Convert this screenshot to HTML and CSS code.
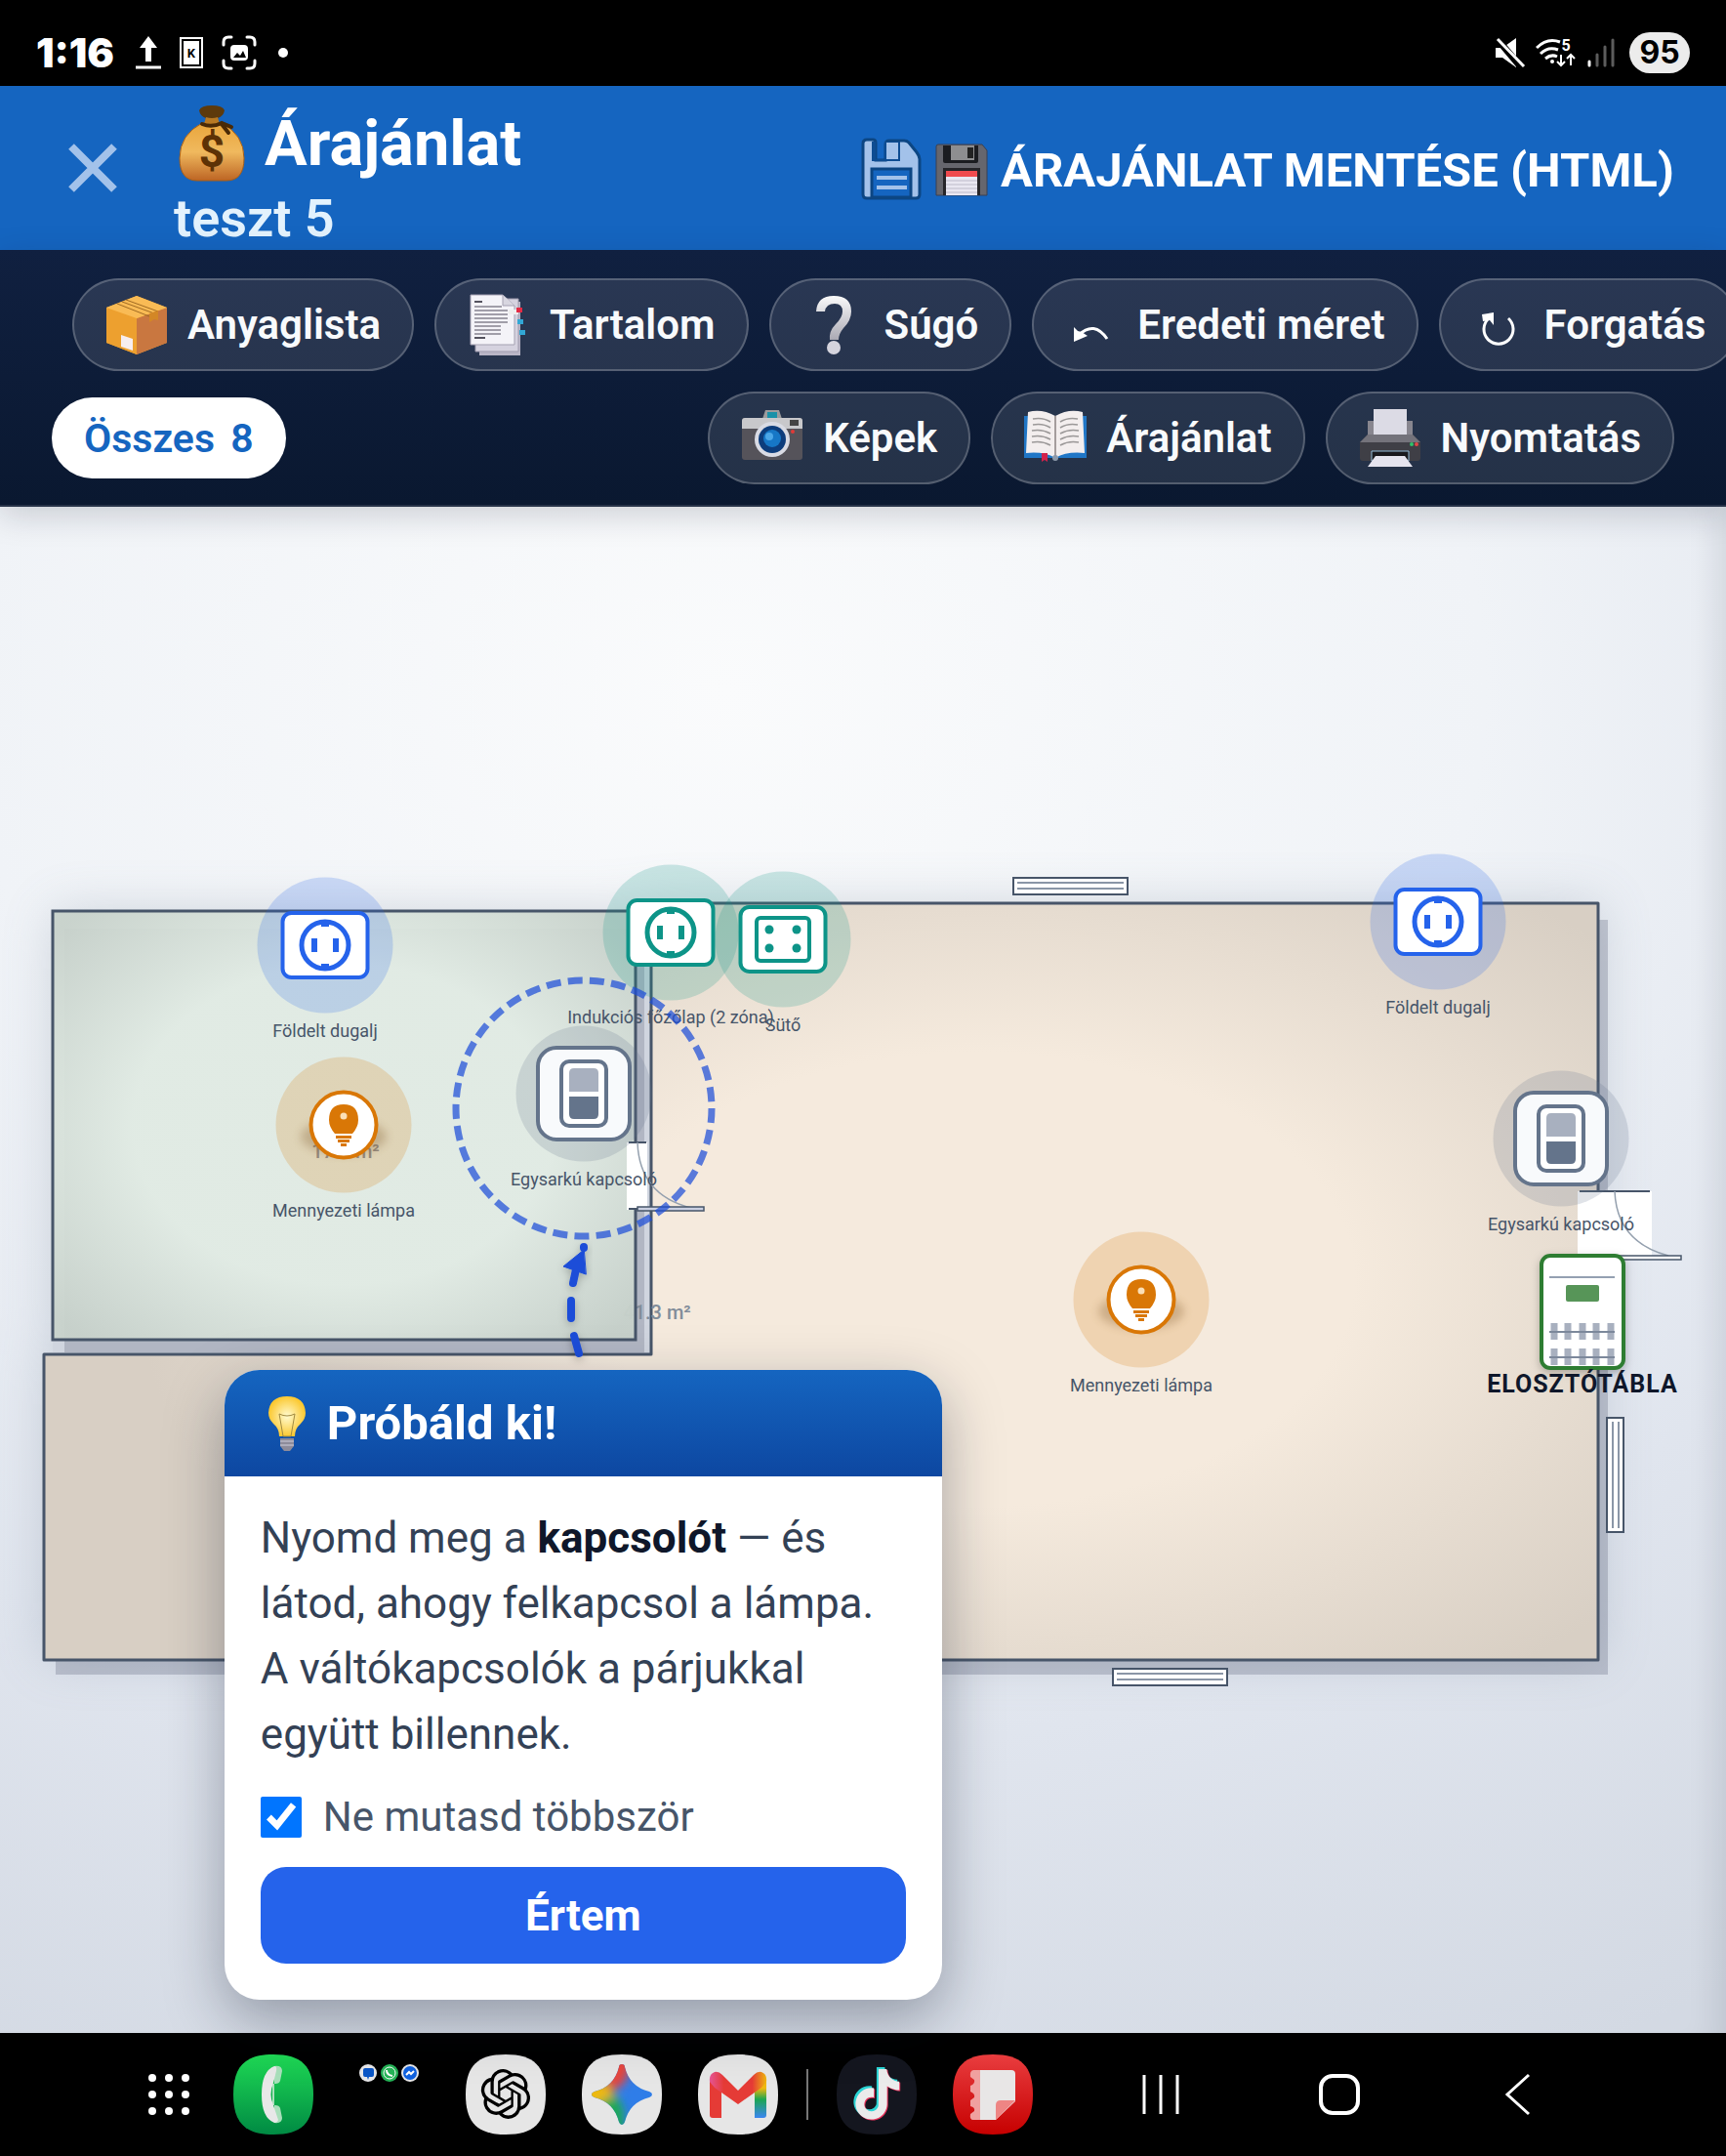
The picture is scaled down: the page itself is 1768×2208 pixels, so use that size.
FILE: index.html
```
<!DOCTYPE html>
<html lang="hu">
<head>
    <meta charset="UTF-8">
    <meta name="viewport" content="width=device-width, initial-scale=1.0">
    <title>Árajánlat – teszt 5</title>
    <link rel="stylesheet" href="styles.css">
</head>
<body>
    <div class="status-bar">
        <span class="clock">1:16</span>
        <svg class="status-icon" width="26" height="36" viewBox="0 0 26 36"><path d="M13 1l9 12h-6v14h-6V13H4z" fill="#fff"/><path d="M0 33h26" stroke="#fff" stroke-width="3"/></svg>
        <svg class="status-icon" width="24" height="36" viewBox="0 0 24 36"><path d="M1 3h22v30H1z" fill="#000" stroke="#fff" stroke-width="2"/><path d="M4 6h16v24H4z" fill="#fff"/><text x="12" y="23" class="card-letter">K</text></svg>
        <svg class="status-icon" width="36" height="36" viewBox="0 0 36 36" fill="none" stroke="#fff" stroke-width="3" stroke-linecap="round"><path d="M2 10V7q0-5 5-5h3M26 2h3q5 0 5 5v3M34 26v3q0 5-5 5h-3M10 34H7q-5 0-5-5v-3"/><rect x="9" y="10" width="18" height="16" rx="4" fill="#fff" stroke="none"/><path d="M12 23l4-5 3 3 3-5 3 7z" fill="#000" stroke="none"/></svg>
        <span class="status-dot"></span>
        <div class="status-right">
            <svg width="32" height="32" viewBox="0 0 32 32"><path d="M1 11h7L22 1v30L8 21H1z" fill="#fff"/><path d="M1 0l27 32" stroke="#000" stroke-width="7"/><path d="M3 2l27 28" stroke="#fff" stroke-width="3"/></svg>
            <svg width="42" height="32" viewBox="0 0 42 32" fill="none" stroke="#fff" stroke-width="3"><path d="M1 11Q12 0 25 5M5 17q8-8 18-4M10 22q6-5 12-2"/><circle cx="17" cy="25" r="2" fill="#fff" stroke="none"/><path d="M26 18v10M22 25l4 4 4-4M36 29V19M32 22l4-4 4 4" stroke-width="2"/><text x="31" y="14" class="wifi-digit">5</text></svg>
            <svg width="30" height="32" viewBox="0 0 30 32" stroke-width="3" stroke-linecap="round"><path d="M3 25v4" stroke="#fff"/><path d="M11 18v11M19 10v19M27 3v26" stroke="#5c5c5c"/></svg>
            <span class="battery">95</span>
        </div>
    </div>

    <header class="header">
        <button class="close-btn" aria-label="Bezárás"><svg width="52" height="54" viewBox="0 0 52 54"><path d="M4 5l44 44M48 5L4 49" stroke="#a3c2ea" stroke-width="8"/></svg></button>
        <div class="header-title">
            <h1>
                <svg width="68" height="78" viewBox="0 0 68 78">
                    <defs><linearGradient id="bag" x2="0" y2="1"><stop offset="0" stop-color="#e9a63c"/><stop offset=".5" stop-color="#f0b95e"/><stop offset="1" stop-color="#bd6524"/></linearGradient></defs>
                    <path d="M24 18Q1 30 1 54q0 23 18 23h30q18 0 18-23Q67 30 44 18z" fill="url(#bag)" stroke="#a85f16"/>
                    <path d="M21 5q2-5 13-5t13 5q-1 6-7 8l2 8H26l2-8q-6-2-7-8z" fill="#5d3a0c"/>
                    <path d="M28 12q6 2 12 0l2 7H26z" fill="#b87a24"/>
                    <path d="M24 19q10 4 20-1l10 4M44 19l7 9" stroke="#4a2a06" stroke-width="4" fill="none" stroke-linecap="round"/>
                    <text x="34" y="63" class="bag-sign">$</text>
                </svg>
                Árajánlat
            </h1>
            <p>teszt 5</p>
        </div>
        <button class="save-btn">
            <svg width="64" height="68" viewBox="0 0 64 68"><path d="M7 3h6q3 0 3 3v18h10V8q0-4 4-4h15q3 0 5 2l8 10q3 4 3 7v36q0 4-4 4H7q-4 0-4-4V7q0-4 4-4z" fill="#a3c2ea" stroke="#0c4683" stroke-width="3"/><path d="M25 5h16v20H12V5h4v18h9z" fill="#0d4c92"/><path d="M27 6h12v17H27z" fill="#a3c2ea"/><path d="M12 33h40v29H12z" fill="#1565c0" stroke="#0c4683" stroke-width="3"/><path d="M17 42h31M17 52h31" stroke="#a3c2ea" stroke-width="4"/></svg>
            <svg width="54" height="54" viewBox="0 0 54 54"><path d="M3 1h45l5 6v46H1V3q0-2 2-2z" fill="#66666d" stroke="#3a4153"/><path d="M8 2h36v16q0 2-2 2H10q-2 0-2-2z" fill="#1b1c20"/><path d="M16 2h24v15H16z" fill="#8e8e90"/><path d="M33 4h6v11h-6z" fill="#222"/><path d="M8 25h38v28H8z" fill="#262529"/><path d="M11 28h32v25H11z" fill="#e9e7f1"/><path d="M11 28h32v6H11z" fill="#f04a4e"/><path d="M11 38h32M11 42h32M11 46h32M11 50h32" stroke="#bdbac9"/></svg>
            <span>ÁRAJÁNLAT MENTÉSE (HTML)</span>
        </button>
    </header>

    <nav class="toolbar">
        <div class="toolbar-row toolbar-scroll">
            <button class="pill">
                <svg width="64" height="64" viewBox="0 0 64 64"><path d="M1 14L32 2l31 12v36L32 62 1 50z" fill="#f2a32f"/><path d="M1 14l31 11v37L1 50z" fill="#eda02f"/><path d="M63 14L32 25v37l31-12z" fill="#c97740"/><path d="M1 14L32 2l31 12-31 11z" fill="#f9bb55"/><path d="M12 10l33 13M17 8l33 12M21 6l33 12" stroke="#a06a22" stroke-width="1"/><path d="M45 20l9-3v10l-4-1-5 3z" fill="#d38726"/><path d="M16 42l12 4v12l-12-4z" fill="#f7eef0"/></svg>
                Anyaglista
            </button>
            <button class="pill">
                <svg width="64" height="64" viewBox="0 0 64 64"><path d="M12 8h42v55H12z" fill="#b9b5c6"/><path d="M8 5h44v54H8z" fill="#d5d2df" stroke="#9f9bad"/><path d="M3 1h33l12 11v40H3z" fill="#f4f3f8" stroke="#a5a1b2"/><path d="M36 1v11h12" fill="#d8d6e0" stroke="#a5a1b2"/><path d="M7 8h8M7 45h11" stroke="#55535f" stroke-width="2"/><path d="M7 13h28M7 17h34M7 21h34M7 25h34M7 29h34M7 33h27M7 37h27M7 41h27" stroke="#85828f" stroke-width="1.5"/><path d="M42 16h10v5H42z" fill="#eee"/><path d="M50 14h6v5h-6z" fill="#e42c46"/><path d="M51 26h6v5h-6zM53 37h6v5h-6z" fill="#32a7d5"/></svg>
                Tartalom
            </button>
            <button class="pill">
                <svg width="64" height="64" viewBox="0 0 64 64"><defs><linearGradient id="ask" x2="0" y2="1"><stop offset="0" stop-color="#fafafa"/><stop offset="1" stop-color="#aaa9b4"/></linearGradient></defs><path d="M14 18Q15 2 32 2q18 0 18 16 0 9-8 17-5 6-5 12h-9q-1-9 6-16 7-7 7-13 0-8-8-8-9 0-10 8z" fill="url(#ask)"/><circle cx="32" cy="55" r="7" fill="#d5d4dd"/></svg>
                Súgó
            </button>
            <button class="pill">
                <svg width="54" height="54" viewBox="0 0 54 54"><path d="M14 37q16-15 29 4" stroke="#fff" stroke-width="3" fill="none"/><path d="M9 29l4 4 4 1 6 4-14 6z" fill="#fff"/></svg>
                Eredeti méret
            </button>
            <button class="pill">
                <svg width="54" height="54" viewBox="0 0 54 54"><path d="M17 20a15 15 0 1 0 20 0" stroke="#fff" stroke-width="3" fill="none"/><path d="M10 16l12-2v13l-4-5-7 1z" fill="#fff"/></svg>
                Forgatás
            </button>
        </div>
        <div class="toolbar-row">
            <button class="filter-chip">Összes <span>8</span></button>
            <div class="toolbar-actions">
                <button class="pill">
                    <svg width="64" height="64" viewBox="0 0 64 64"><path d="M22 12l3-9h14l3 9z" fill="#9b9b9d"/><path d="M27 5h10v7H27z" fill="#1a91a8"/><rect x="1" y="11" width="62" height="43" rx="3" fill="#55535a"/><path d="M1 14q0-3 3-3h56q3 0 3 3v8H1z" fill="#c8c8cb"/><circle cx="32" cy="33" r="18" fill="#d9dbe4"/><circle cx="32" cy="33" r="14" fill="#0d3d7c"/><circle cx="32" cy="32" r="9" fill="#1677c6"/><circle cx="29" cy="30" r="4" fill="#4ca7e7"/><path d="M50 13h9v6h-9z" fill="#444"/><circle cx="53" cy="25" r="2" fill="#e13a37"/></svg>
                    Képek
                </button>
                <button class="pill">
                    <svg width="64" height="64" viewBox="0 0 64 64"><path d="M0 9h64v43H0z" fill="#2076c6"/><path d="M4 5q14-4 28 4 14-8 28-4l2 42q-18-2-30 5-12-7-30-5z" fill="#f3eeee"/><path d="M32 9v42" stroke="#a59d9d" stroke-width="2"/><path d="M9 12q10-2 18 3M9 18q10-2 18 3M8 24q10-2 19 3M8 30q10-2 19 3M8 36q10-2 19 3M55 12q-10-2-18 3M55 18q-10-2-18 3M56 24q-10-2-19 3M56 30q-10-2-19 3M56 36q-10-2-19 3" stroke="#9b9898" fill="none" stroke-width="1.5"/><path d="M18 47h6v9l-3-2-3 2z" fill="#d0224a"/><circle cx="32" cy="52" r="3" fill="#8c99aa"/></svg>
                    Árajánlat
                </button>
                <button class="pill">
                    <svg width="64" height="64" viewBox="0 0 64 64"><path d="M9 14h46v16H9z" fill="#88868f"/><path d="M15 2h34v26H15z" fill="#dcdbe5"/><path d="M9 28h46l8 8v16q0 3-3 3H4q-3 0-3-3V36z" fill="#3f3f46"/><path d="M9 28h46l8 8H1z" fill="#74737b"/><path d="M13 45h38v10H13z" fill="#19191d" stroke="#96bdd8"/><path d="M17 50h30l8 11H9z" fill="#e5e4ee"/><circle cx="54" cy="38" r="2" fill="#30c26a"/><circle cx="59" cy="38" r="2" fill="#e14747"/></svg>
                    Nyomtatás
                </button>
            </div>
        </div>
    </nav>

    <main class="canvas">
        <svg class="floor-plan" viewBox="0 519 1768 1563">
            <defs>
                <radialGradient id="green" gradientUnits="userSpaceOnUse" cx="352" cy="1152" r="350" gradientTransform="translate(352 1152) scale(1.12 .85) translate(-352 -1152)"><stop offset=".55" stop-color="#e4eee6"/><stop offset="1" stop-color="#c8d2cb"/></radialGradient>
                <radialGradient id="beige" gradientUnits="userSpaceOnUse" cx="1000" cy="1310" r="860" gradientTransform="translate(1000 1310) scale(1 .6) translate(-1000 -1310)"><stop offset=".45" stop-color="#f5eadd"/><stop offset="1" stop-color="#d8cfc4"/></radialGradient>
                <filter id="soft" x="-20%" y="-20%" width="140%" height="140%"><feGaussianBlur stdDeviation="26"/></filter>
                <filter id="lamp-blur" x="-30%" y="-50%" width="160%" height="200%"><feGaussianBlur stdDeviation="5"/></filter>
                <filter id="small-shadow" x="-30%" y="-30%" width="160%" height="160%"><feDropShadow dx="0" dy="3" stdDeviation="4" flood-opacity=".25"/></filter>
                <g id="socket">
                    <circle r="69.500" fill="currentColor" opacity=".2"/>
                    <rect x="-43.500" y="-33" width="87" height="66" rx="9" fill="#fff" stroke="currentColor" stroke-width="4"/>
                    <circle r="24" fill="none" stroke="currentColor" stroke-width="5"/>
                    <path d="M-14-7h6V7h-6zM8-7h6V7H8zM-4-24h8v5h-8zM-4 19h8v5h-8z" fill="currentColor"/>
                </g>
                <g id="hob">
                    <circle r="69.500" fill="currentColor" opacity=".2"/>
                    <rect x="-43.500" y="-33" width="87" height="66" rx="9" fill="#fff" stroke="currentColor" stroke-width="4"/>
                    <rect x="-27" y="-22" width="54" height="44" rx="4" fill="none" stroke="currentColor" stroke-width="4"/>
                    <circle cx="-14" cy="-10" r="4.500" fill="currentColor"/><circle cx="14" cy="-10" r="4.500" fill="currentColor"/>
                    <circle cx="-14" cy="9" r="4.500" fill="currentColor"/><circle cx="14" cy="9" r="4.500" fill="currentColor"/>
                </g>
                <g id="lamp">
                    <circle r="69.500" fill="#d97706" opacity=".2"/>
                    <ellipse cy="12" rx="44" ry="18" fill="#7a5526" opacity=".3" filter="url(#lamp-blur)"/>
                    <circle r="33.500" fill="#fff" stroke="#d97706" stroke-width="4"/>
                    <path d="M-9 9q-6-7-6-14Q-15-21 0-21T15-5q0 7-6 14zM-8 11H8v3H-8zM-6 15H6v3H-6zM-3 19h6v3h-6z" fill="#d97706"/>
                    <circle cy="-9" r="3.500" fill="#fbdfb6"/>
                </g>
                <g id="switch">
                    <circle r="69.500" fill="#64748b" opacity=".2"/>
                    <rect x="-47" y="-47" width="94" height="94" rx="19" fill="#f8fafc" stroke="#64748b" stroke-width="4"/>
                    <rect x="-23" y="-33" width="46" height="66" rx="8" fill="#fff" stroke="#64748b" stroke-width="4"/>
                    <path d="M-15-2v-19q0-5 5-5h20q5 0 5 5v19z" fill="#a8b0bf"/>
                    <path d="M-15 3v18q0 5 5 5h20q5 0 5-5V3z" fill="#64748b"/>
                </g>
                <g id="window">
                    <rect x="-58" y="-8" width="117" height="17" fill="#fff" stroke="#475569" stroke-width="2"/>
                    <path d="M-54-3H55M-54 3H55" stroke="#64748b" stroke-width="1.500"/>
                </g>
            </defs>

            <!-- rooms -->
            <path d="M54 933H660V925H1640V1700H45V1387H54z" fill="#64748b" opacity=".25" filter="url(#soft)"/>
            <path d="M57 1403H683V942H1647V1715H57z" fill="#6b7086" opacity=".32"/>
            <path d="M45 1387H667V925H1637V1700H45z" fill="url(#beige)" stroke="#475569" stroke-width="3" stroke-linejoin="round"/>
            <path d="M651 933H665V1385H54V1372H651z" fill="#d0d5df"/>
            <path d="M66 951H660V1385H66z" fill="#6b7086" opacity=".3"/>
            <text x="673" y="1351" class="area">41.3 m²</text>
            <rect x="54" y="933" width="597" height="439" fill="url(#green)" fill-opacity=".94" stroke="#475569" stroke-width="3"/>
            <text x="354" y="1186" class="area">17.1 m²</text>

            <!-- doors -->
            <g stroke="#475569" stroke-width="2" fill="none">
                <path d="M642 1170h21v69h-21z" fill="#fff" stroke="none"/>
                <path d="M644 1170h18M644 1238h9"/>
                <path d="M653 1170q2 54 55 67" stroke="#94a0ae" stroke-width="1.500"/>
                <path d="M653 1236h68v4h-68z" fill="#cbd0e2" stroke-width="1.500"/>
                <path d="M1616 1220h76v67h-76z" fill="#fff" stroke="none"/>
                <path d="M1618 1220h72"/>
                <path d="M1654 1220q2 52 55 66" stroke="#94a0ae" stroke-width="1.500"/>
                <path d="M1654 1286h68v4h-68z" fill="#fff" stroke-width="1.500"/>
            </g>

            <!-- windows -->
            <use href="#window" x="1096" y="907"/>
            <use href="#window" x="1198" y="1717"/>
            <use href="#window" transform="translate(1655 1510) rotate(90)"/>

            <!-- devices -->
            <g class="blue"><use href="#socket" x="333" y="968"/><use href="#socket" x="1473" y="944"/></g>
            <g class="teal"><use href="#socket" x="687" y="955"/><use href="#hob" x="802" y="962"/></g>
            <use href="#lamp" x="352" y="1152"/>
            <use href="#lamp" x="1169" y="1331"/>
            <use href="#switch" x="598" y="1120"/>
            <use href="#switch" x="1599" y="1166"/>

            <g class="device-label">
                <text x="333" y="1062">Földelt dugalj</text>
                <text x="1473" y="1038">Földelt dugalj</text>
                <text x="687" y="1048">Indukciós főzőlap (2 zóna)</text>
                <text x="802" y="1056">Sütő</text>
                <text x="352" y="1246">Mennyezeti lámpa</text>
                <text x="1169" y="1425">Mennyezeti lámpa</text>
                <text x="598" y="1214">Egysarkú kapcsoló</text>
                <text x="1599" y="1260">Egysarkú kapcsoló</text>
            </g>

            <!-- distribution board -->
            <rect x="1579" y="1286" width="84" height="115" rx="9" fill="#fff" stroke="#2e7d32" stroke-width="4" filter="url(#small-shadow)"/>
            <path d="M1587 1308h67" stroke="#94a0b2" stroke-width="2"/>
            <rect x="1604" y="1316" width="34" height="17" rx="2" fill="#579558"/>
            <path d="M1592 1355v17M1606 1355v17M1621 1355v17M1635 1355v17M1650 1355v17M1592 1381v17M1606 1381v17M1621 1381v17M1635 1381v17M1650 1381v17" stroke="#a8b0bf" stroke-width="7"/>
            <path d="M1587 1364h67M1587 1390h67" stroke="#7c889b" stroke-width="2"/>
            <text x="1621" y="1426" class="board-label">ELOSZTÓTÁBLA</text>

            <!-- hint ring and arrow -->
            <circle cx="598" cy="1135" r="131" fill="none" stroke="#1d4ed8" stroke-width="7" stroke-dasharray="15 7.250" opacity=".72"/>
            <g stroke="#1d4ed8" stroke-width="8" stroke-linecap="round" filter="url(#small-shadow)"><path d="M598 1277v1M590 1300l-3 14M585 1332v18M588 1368l5 18"/><path d="M598 1280l-21 17 23 8z" fill="#1d4ed8" stroke-width="1"/></g>
        </svg>

        <section class="hint">
            <h2>
                <svg width="54" height="58" viewBox="0 0 54 58"><defs><radialGradient id="glow"><stop offset="0" stop-color="#fffbd0"/><stop offset="1" stop-color="#fbc831"/></radialGradient></defs><path d="M19 42q0-8-6-13-5-5-5-11Q9 1 27 1t19 17q0 6-5 11-6 5-6 13z" fill="url(#glow)"/><path d="M19 19q8 4 16 0l-4 23h-8z" fill="none" stroke="#a18b42"/><path d="M20 44h14v8l-4 5h-6l-4-5z" fill="#8d8b9a"/><path d="M20 47h14M20 51h14" stroke="#cfcedb"/></svg>
                Próbáld ki!
            </h2>
            <div class="hint-body">
                <p>Nyomd meg a <b>kapcsolót</b> — és látod, ahogy felkapcsol a lámpa. A&nbsp;váltókapcsolók a párjukkal együtt billennek.</p>
                <label class="hint-check"><input type="checkbox" id="hideHint" checked> Ne mutasd többször</label>
                <button class="hint-ok" id="hintOk">Értem</button>
            </div>
        </section>
    </main>

    <footer class="dock">
        <div class="dock-apps">
            <svg class="apps-grid" width="82" height="82" viewBox="0 0 82 82" fill="#fff"><circle cx="24" cy="24" r="4"/><circle cx="41" cy="24" r="4"/><circle cx="58" cy="24" r="4"/><circle cx="24" cy="41" r="4"/><circle cx="41" cy="41" r="4"/><circle cx="58" cy="41" r="4"/><circle cx="24" cy="58" r="4"/><circle cx="41" cy="58" r="4"/><circle cx="58" cy="58" r="4"/></svg>
            <svg width="82" height="82" viewBox="0 0 82 82">
                <defs>
                    <linearGradient id="call" x2="0" y2="1"><stop offset="0" stop-color="#1fda55"/><stop offset="1" stop-color="#008a43"/></linearGradient>
                    <path id="squircle" d="M41 0C70 0 82 12 82 41S70 82 41 82 0 70 0 41 12 0 41 0z"/>
                </defs>
                <use href="#squircle" fill="url(#call)"/>
                <path d="M42 12q8-1 8 5l-2 10q-1 3-5 3h-3v22h3q4 0 5 3l2 10q0 6-8 5z" fill="#a9dfbb"/>
                <path d="M42 12q3 0 2 5l-3 12q-5 12 0 23l5 15q-1 3-4 3-13-5-13-29t13-29z" fill="#e8e8e8"/>
            </svg>
            <svg width="82" height="82" viewBox="0 0 82 82">
                <circle cx="19" cy="19" r="9" fill="#e8e8ea"/><path d="M14 16q0-2 2-2h7q2 0 2 2v5q0 2-2 2h-3l-1 3-1-3h-2q-2 0-2-2z" fill="#0b57c8"/>
                <circle cx="41" cy="19" r="9" fill="#25b457"/><circle cx="41" cy="19" r="6" fill="none" stroke="#fff"/><path d="M38 16q0 5 6 6" stroke="#fff" stroke-width="2" fill="none"/>
                <circle cx="62" cy="19" r="9" fill="#e8e8ea"/><circle cx="62" cy="19" r="7" fill="#0f61e0"/><path d="M58 21l3-3 2 2 3-3" stroke="#fff" stroke-width="2" fill="none"/>
            </svg>
            <svg width="82" height="82" viewBox="0 0 82 82"><use href="#squircle" fill="#e6e6e6"/><path transform="translate(15.500 15) scale(2.120)" d="M22.2819 9.8211a5.9847 5.9847 0 0 0-.5157-4.9108 6.0462 6.0462 0 0 0-6.5098-2.9A6.0651 6.0651 0 0 0 4.9807 4.1818a5.9847 5.9847 0 0 0-3.9977 2.9 6.0462 6.0462 0 0 0 .7427 7.0966 5.98 5.98 0 0 0 .511 4.9107 6.051 6.051 0 0 0 6.5146 2.9001A5.9847 5.9847 0 0 0 13.2599 24a6.0557 6.0557 0 0 0 5.7718-4.2058 5.9894 5.9894 0 0 0 3.9977-2.9001 6.0557 6.0557 0 0 0-.7475-7.0729zm-9.022 12.6081a4.4755 4.4755 0 0 1-2.8764-1.0408l.1419-.0804 4.7783-2.7582a.7948.7948 0 0 0 .3927-.6813v-6.7369l2.02 1.1686a.071.071 0 0 1 .038.052v5.5826a4.504 4.504 0 0 1-4.4945 4.4944zm-9.6607-4.1254a4.4708 4.4708 0 0 1-.5346-3.0137l.142.0852 4.783 2.7582a.7712.7712 0 0 0 .7806 0l5.8428-3.3685v2.3324a.0804.0804 0 0 1-.0332.0615L9.74 19.9502a4.4992 4.4992 0 0 1-6.1408-1.6464zM2.3408 7.8956a4.485 4.485 0 0 1 2.3655-1.9728V11.6a.7664.7664 0 0 0 .3879.6765l5.8144 3.3543-2.0201 1.1685a.0757.0757 0 0 1-.071 0l-4.8303-2.7865A4.504 4.504 0 0 1 2.3408 7.872zm16.5963 3.8558L13.1038 8.364 15.1192 7.2a.0757.0757 0 0 1 .071 0l4.8303 2.7913a4.4944 4.4944 0 0 1-.6765 8.1042v-5.6772a.79.79 0 0 0-.407-.667zm2.0107-3.0231l-.142-.0852-4.7735-2.7818a.7759.7759 0 0 0-.7854 0L9.409 9.2297V6.8974a.0662.0662 0 0 1 .0284-.0615l4.8303-2.7866a4.4992 4.4992 0 0 1 6.6802 4.66zM8.3065 12.863l-2.02-1.1638a.0804.0804 0 0 1-.038-.0567V6.0742a4.4992 4.4992 0 0 1 7.3757-3.4537l-.142.0805L8.704 5.459a.7948.7948 0 0 0-.3927.6813zm1.0976-2.3654l2.602-1.4998 2.6069 1.4998v2.9994l-2.5974 1.4997-2.6067-1.4997Z"/></svg>
            <svg width="82" height="82" viewBox="0 0 82 82">
                <defs>
                    <clipPath id="spark"><path d="M41 10q3 0 3 3 5 20 25 25 3 1 3 3t-3 3q-20 5-25 25-1 3-3 3t-3-3q-5-20-25-25-3-1-3-3t3-3q20-5 25-25 0-3 3-3z"/></clipPath>
                    <filter id="mix" x="-50%" y="-50%" width="200%" height="200%"><feGaussianBlur stdDeviation="5"/></filter>
                </defs>
                <use href="#squircle" fill="#e6e6e6"/>
                <g clip-path="url(#spark)"><path d="M0 0h82v82H0z" fill="#2f7de8"/><g filter="url(#mix)"><path d="M20 0h36L43 30 28 40z" fill="#e8453a"/><path d="M0 25l25 5 8 12-15 15H0z" fill="#efb90e"/><path d="M18 48l18-6 7 15v25H25z" fill="#1fa855"/></g></g>
            </svg>
            <svg width="82" height="82" viewBox="0 0 82 82">
                <defs>
                    <linearGradient id="mailRight" x2="0" y2="1"><stop offset=".2" stop-color="#efb80f"/><stop offset=".5" stop-color="#1ca651"/><stop offset="1" stop-color="#3b86f2"/></linearGradient>
                    <linearGradient id="mailTop"><stop offset="0" stop-color="#e65696"/><stop offset=".25" stop-color="#e53b36"/><stop offset=".75" stop-color="#e53b36"/><stop offset="1" stop-color="#efb80f"/></linearGradient>
                </defs>
                <use href="#squircle" fill="#e6e6e6"/>
                <path d="M12 27h12v38H15q-3 0-3-3z" fill="#e53b36"/><path d="M58 27h12v35q0 3-3 3h-9z" fill="url(#mailRight)"/>
                <path d="M12 28q-1-8 5-10 4-1 8 3l16 16 16-16q4-4 8-3 6 2 5 10l-5 6-24 17-24-17z" fill="url(#mailTop)"/>
            </svg>
            <span class="dock-divider"></span>
            <svg width="82" height="82" viewBox="0 0 82 82"><defs><path id="note" transform="translate(16 15) scale(2.150)" d="M12.525.02c1.31-.02 2.61-.01 3.91-.02.08 1.53.63 3.09 1.75 4.17 1.12 1.11 2.7 1.62 4.24 1.79v4.03c-1.44-.05-2.89-.35-4.2-.97-.57-.26-1.1-.59-1.62-.93-.01 2.92.01 5.84-.02 8.75-.08 1.4-.54 2.79-1.35 3.94-1.31 1.92-3.58 3.17-5.91 3.21-1.43.08-2.86-.31-4.08-1.03-2.02-1.19-3.44-3.37-3.65-5.71-.02-.5-.03-1-.01-1.49.18-1.9 1.12-3.72 2.58-4.96 1.66-1.44 3.98-2.13 6.15-1.72.02 1.48-.04 2.96-.04 4.44-.99-.32-2.15-.23-3.02.37-.63.41-1.11 1.04-1.36 1.75-.21.51-.15 1.07-.14 1.61.24 1.64 1.82 3.02 3.5 2.87 1.12-.01 2.19-.66 2.77-1.61.19-.33.4-.67.41-1.06.1-1.79.06-3.57.07-5.36.01-4.03-.01-8.05.02-12.07z"/></defs><use href="#squircle" fill="#14161f"/><use href="#note" x="-2" y="-2" fill="#2bd5d5"/><use href="#note" x="1" y="1" fill="#e8305a"/><use href="#note" fill="#ebebeb"/></svg>
            <svg width="82" height="82" viewBox="0 0 82 82"><defs><linearGradient id="notes" x2="0" y2="1"><stop offset="0" stop-color="#e93d3f"/><stop offset="1" stop-color="#c60000"/></linearGradient></defs><use href="#squircle" fill="url(#notes)"/><path d="M28 16h32q4 0 4 4v28L44 67H28z" fill="#e8e6e6"/><path d="M28 16h-7q-4 1-3 7l4 3q1 4-4 6v6q5 2 4 6l-4 3v6q5 1 4 5l-4 3q-1 6 3 6h7z" fill="#f0a09f"/><path d="M64 47H49q-5 0-5 5v15z" fill="#ee8584"/></svg>
        </div>
        <div class="dock-nav">
            <button aria-label="Legutóbbiak"><svg width="42" height="44" viewBox="0 0 42 44" stroke="#fff" stroke-width="3"><path d="M4 2v40M21 2v40M38 2v40"/></svg></button>
            <button aria-label="Kezdőlap"><svg width="42" height="44" viewBox="0 0 42 44"><rect x="2" y="3" width="38" height="38" rx="12" fill="none" stroke="#fff" stroke-width="4"/></svg></button>
            <button aria-label="Vissza"><svg width="42" height="44" viewBox="0 0 42 44"><path d="M32 2L10 22l22 20" fill="none" stroke="#fff" stroke-width="3"/></svg></button>
        </div>
    </footer>

    <script>
        document.getElementById('hintOk').addEventListener('click', () => {
            document.querySelector('.hint').hidden = true;
        });
    </script>
</body>
</html>
```
FILE: styles.css
```
* {
    box-sizing: border-box;
}
body {
    margin: 0;
    min-height: 100vh;
    display: flex;
    flex-direction: column;
    overflow-x: hidden;
    background-color: black;
    font-family: Roboto, Arial, sans-serif;
}
button {
    border: none;
    padding: 0;
    background: none;
    color: inherit;
    font-family: inherit;
    cursor: pointer;
}
svg {
    display: block;
    flex-shrink: 0;
}
h1, h2, p {
    margin: 0;
}

/* Status bar */
.status-bar {
    display: flex;
    align-items: center;
    gap: 22px;
    height: 88px;
    padding: 20px 37px 0;
    color: white;
    font-family: Inter, sans-serif;
}
.clock {
    font-size: 41px;
    line-height: 48px;
    font-weight: 900;
}
.status-icon + .status-icon {
    margin-left: -3px;
}
.status-dot {
    width: 10px;
    height: 10px;
    border-radius: 50%;
    background: white;
}
.status-right {
    display: flex;
    align-items: center;
    gap: 10px;
    margin-left: auto;
}
.battery {
    margin-left: 4px;
    width: 62px;
    line-height: 42px;
    border-radius: 21px;
    background: #ececec;
    color: black;
    font-size: 32px;
    font-weight: 700;
    text-align: center;
}
.card-letter {
    font: 700 13px Roboto, sans-serif;
    text-anchor: middle;
}
.wifi-digit {
    font: 700 16px Roboto, sans-serif;
    text-anchor: middle;
    fill: white;
    stroke: none;
}

/* Header */
.header {
    display: flex;
    align-items: center;
    height: 168px;
    padding: 0 53px 0 69px;
    background: #1565c0;
    color: white;
}
.header-title {
    margin-left: 57px;
    padding-top: 19px;
}
.header-title h1 {
    display: flex;
    align-items: center;
    gap: 20px;
    padding-left: 5px;
    font-size: 65px;
    line-height: 78px;
    font-weight: 700;
}
.header-title p {
    margin-top: 6px;
    color: #e3f2fd;
    font-size: 54px;
    line-height: 64px;
    font-weight: 600;
}
.bag-sign {
    font: 700 46px Roboto, sans-serif;
    text-anchor: middle;
    fill: #5d3206;
}
.save-btn {
    display: flex;
    align-items: center;
    gap: 13px;
    margin-left: auto;
    padding-top: 4px;
    font-size: 49px;
    font-weight: 700;
}

/* Toolbar */
.toolbar {
    display: flex;
    flex-direction: column;
    gap: 21px;
    padding: 29px 0 21px;
    border-bottom: 2px solid #263248;
    background: linear-gradient(180deg, #102040, #0a1830);
    position: relative;
    box-shadow: 0 8px 32px rgba(15, 23, 42, 0.18);
    z-index: 1;
}
.toolbar-row {
    display: flex;
    align-items: center;
    justify-content: space-between;
    padding: 0 53px;
}
.toolbar-scroll {
    justify-content: flex-start;
    gap: 21px;
    padding: 0 0 0 74px;
    overflow: hidden;
}
.toolbar-actions {
    display: flex;
    gap: 21px;
}
.pill {
    display: flex;
    align-items: center;
    gap: 20px;
    flex-shrink: 0;
    height: 95px;
    padding: 0 32px;
    border: 2px solid rgba(255, 255, 255, 0.22);
    border-radius: 48px;
    background: rgba(255, 255, 255, 0.11);
    color: #f8fafc;
    font-size: 42px;
    font-weight: 600;
    white-space: nowrap;
}
.filter-chip {
    height: 83px;
    padding: 0 33px;
    border-radius: 42px;
    background: white;
    color: #1565c0;
    font-size: 41px;
    font-weight: 600;
}
.filter-chip span {
    margin-left: 6px;
}

/* Canvas */
.canvas {
    position: relative;
    flex: 1;
    background: radial-gradient(ellipse 110% 100% at 42% 12%, #fafbfc 0%, #f0f3f7 40%, #e0e5ee 70%, #d3d9e3 100%);
    box-shadow: inset -34px 0 34px -28px rgba(15, 23, 42, 0.12);
}
.floor-plan {
    width: 100%;
    height: auto;
}
.blue {
    color: #2563eb;
}
.teal {
    color: #0d9488;
}
.device-label {
    font-size: 18px;
    fill: #475569;
    text-anchor: middle;
}
.area {
    font-size: 20px;
    font-weight: 500;
    fill: #828d9a;
    text-anchor: middle;
}
.board-label {
    font-size: 25px;
    font-weight: 700;
    letter-spacing: 1px;
    fill: #0f172a;
    text-anchor: middle;
}

/* Hint card */
.hint {
    position: absolute;
    left: 13%;
    bottom: 34px;
    width: 735px;
    border-radius: 36px;
    overflow: hidden;
    background: white;
    box-shadow: 0 20px 60px rgba(15, 23, 42, 0.35);
}
.hint h2 {
    display: flex;
    align-items: center;
    gap: 14px;
    height: 109px;
    padding: 0 37px;
    background: linear-gradient(180deg, #1565c0, #0d47a1);
    color: white;
    font-size: 49px;
    font-weight: 700;
}
.hint-body {
    padding: 30px 37px 37px;
}
.hint-body p {
    color: #334155;
    font-size: 44px;
    line-height: 67px;
}
.hint-body b {
    color: #0f172a;
}
.hint-check {
    display: flex;
    align-items: center;
    gap: 22px;
    margin: 26px 0;
    color: #475569;
    font-size: 42px;
    line-height: 50px;
}
.hint-check input {
    width: 42px;
    height: 42px;
    margin: 0;
    accent-color: #0075ff;
}
.hint-ok {
    display: block;
    width: 100%;
    height: 99px;
    border-radius: 26px;
    background: #2563eb;
    color: white;
    font-size: 44px;
    font-weight: 700;
}

/* System dock */
.dock {
    display: flex;
    align-items: center;
    justify-content: space-between;
    height: 126px;
    padding: 0 192px 0 132px;
}
.dock-apps {
    display: flex;
    align-items: center;
    gap: 37px;
}
.apps-grid {
    margin-right: -12px;
}
.dock-divider {
    width: 2px;
    height: 52px;
    margin: 0 -8px;
    background: #777;
}
.dock-nav {
    display: flex;
    gap: 141px;
}
```
